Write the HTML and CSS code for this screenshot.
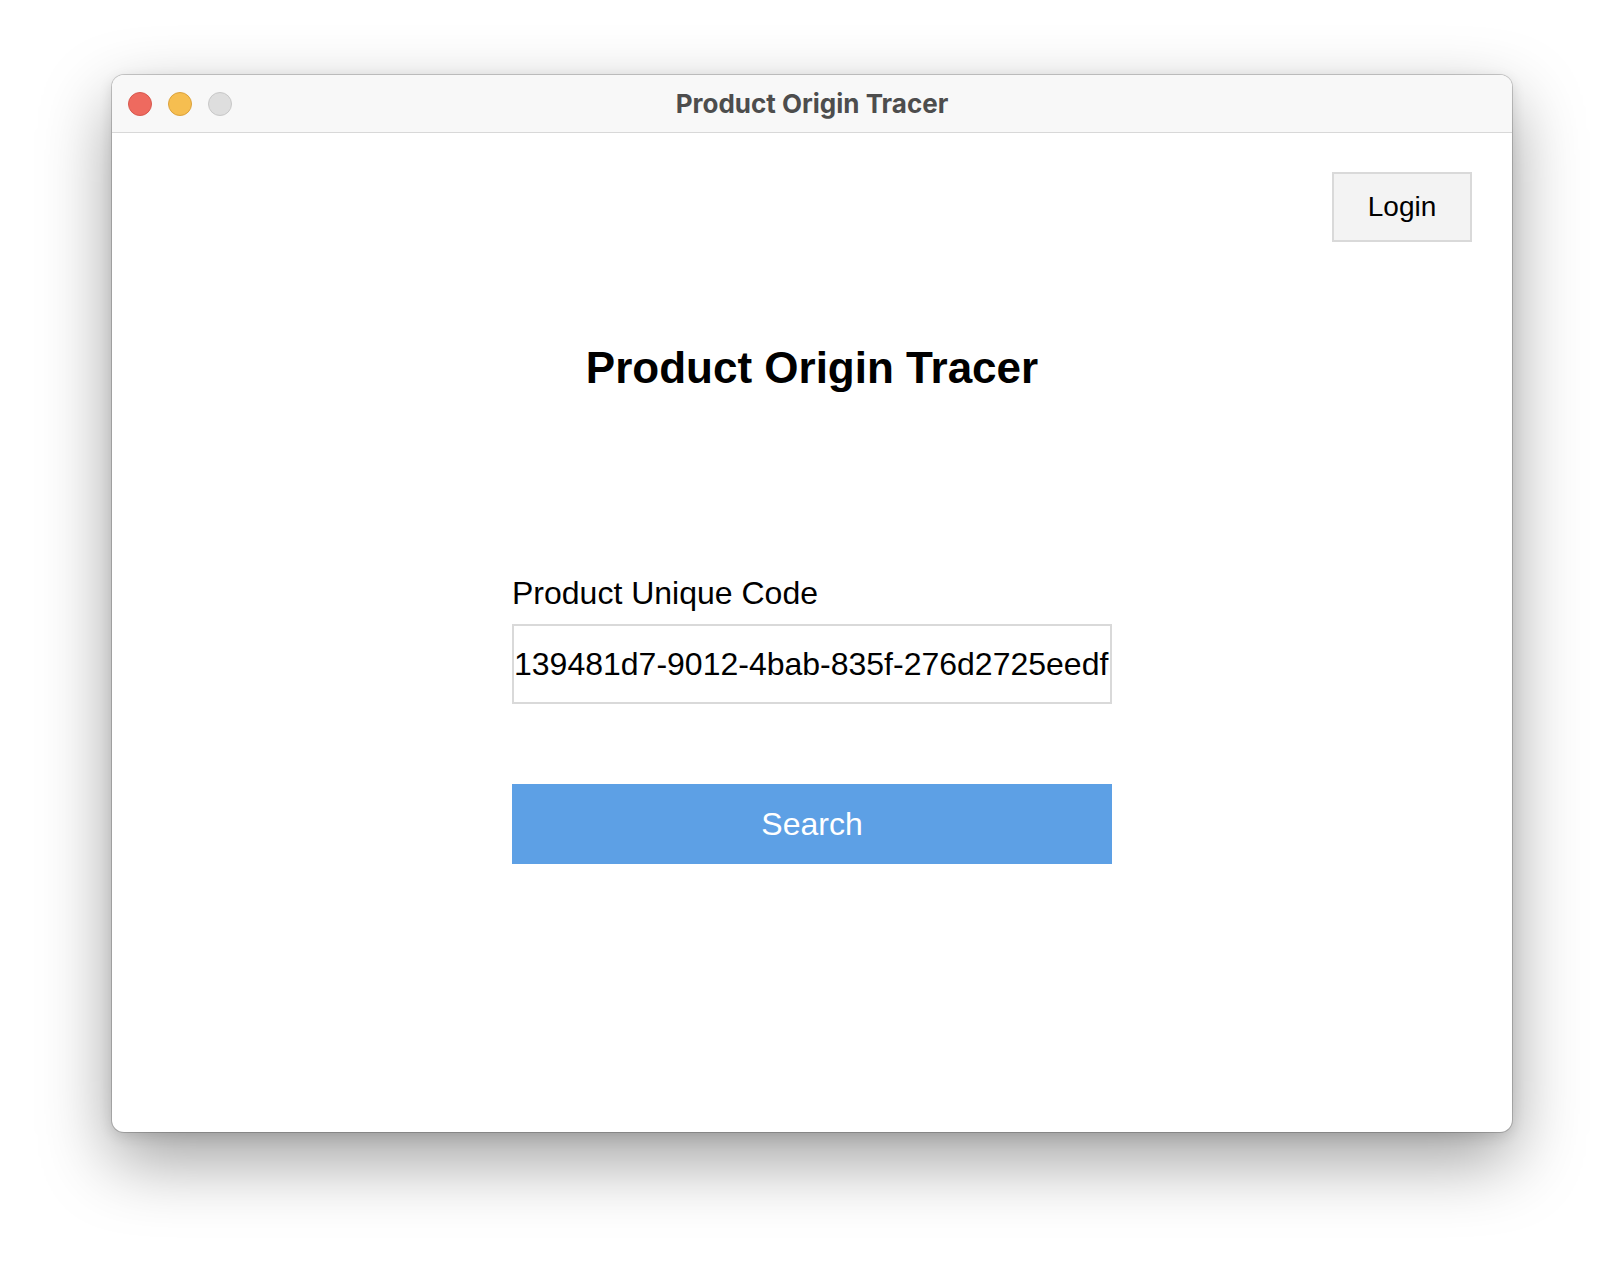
FILE: index.html
```html
<!DOCTYPE html>
<html lang="en">
<head>
<meta charset="utf-8">
<title>Product Origin Tracer</title>
<link rel="stylesheet" href="styles.css">
</head>
<body>
<div class="window">
  <div class="titlebar">
    <div class="lights">
      <span class="light red"></span>
      <span class="light yellow"></span>
      <span class="light gray"></span>
    </div>
    <div class="wintitle">Product Origin Tracer</div>
  </div>
  <div class="content">
    <div class="toprow">
      <button class="login">Login</button>
    </div>
    <h1 class="heading">Product Origin Tracer</h1>
    <div class="form">
      <label class="label">Product Unique Code</label>
      <div class="field">139481d7-9012-4bab-835f-276d2725eedf</div>
      <button class="search">Search</button>
    </div>
  </div>
</div>
</body>
</html>
```
FILE: styles.css
```css
html, body {
  margin: 0;
  padding: 0;
  background: #ffffff;
}
body {
  width: 1624px;
  height: 1280px;
  overflow: hidden;
  font-family: "Liberation Sans", Arial, sans-serif;
}
.window {
  margin: 75px 0 0 112px;
  width: 1400px;
  height: 1057px;
  box-sizing: border-box;
  border-radius: 12px;
  background: #ffffff;
  overflow: hidden;
  box-shadow: 0 0 0 1px rgba(0,0,0,0.18), 0 28px 70px rgba(0,0,0,0.38), 0 4px 14px rgba(0,0,0,0.12);
  display: flex;
  flex-direction: column;
}
.titlebar {
  height: 58px;
  box-sizing: border-box;
  background: #f8f8f8;
  border-bottom: 1px solid #d8d8d8;
  display: grid;
  grid-template-columns: 1fr auto 1fr;
  align-items: center;
  flex: none;
}
.lights {
  display: flex;
  gap: 16px;
  padding-left: 16px;
}
.light {
  width: 24px;
  height: 24px;
  border-radius: 50%;
  box-sizing: border-box;
  display: block;
}
.red { background: #ee6a5f; border: 1px solid #d8584e; }
.yellow { background: #f6be50; border: 1px solid #dca23c; }
.gray { background: #dedede; border: 1px solid #c8c8c8; }
.wintitle {
  font-family: Inter, "Liberation Sans", sans-serif;
  font-weight: 700;
  font-size: 26px;
  color: #4d4d4d;
  letter-spacing: 0;
}
.content {
  flex: 1;
  display: flex;
  flex-direction: column;
  align-items: center;
}
.toprow {
  align-self: stretch;
  display: flex;
  justify-content: flex-end;
  padding: 39px 40px 0 0;
}
.login {
  width: 140px;
  height: 70px;
  box-sizing: border-box;
  border: 2px solid #d9d9d9;
  background: #f3f3f3;
  font-family: "Liberation Sans", Arial, sans-serif;
  font-size: 28px;
  color: #000;
  padding: 0;
}
.heading {
  margin: 101px 0 0 0;
  font-size: 44px;
  line-height: 50px;
  font-weight: bold;
  color: #000;
}
.form {
  width: 600px;
  margin-top: 182px;
  display: flex;
  flex-direction: column;
}
.label {
  font-size: 32px;
  line-height: 37px;
  color: #000;
}
.field {
  margin-top: 12px;
  height: 80px;
  box-sizing: border-box;
  border: 2px solid #d9d9d9;
  display: flex;
  align-items: center;
  padding-left: 0;
  font-size: 32px;
  white-space: nowrap;
  color: #000;
  background: #fff;
}
.search {
  margin-top: 80px;
  height: 80px;
  border: none;
  background: #5da0e5;
  color: #ffffff;
  font-family: "Liberation Sans", Arial, sans-serif;
  font-size: 32px;
  padding: 0;
}
```
